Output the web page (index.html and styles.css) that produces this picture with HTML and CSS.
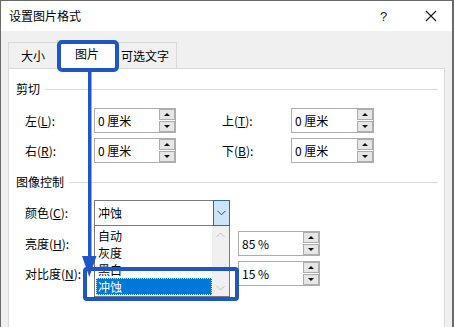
FILE: index.html
```html
<!DOCTYPE html>
<html lang="zh-CN">
<head>
<meta charset="utf-8">
<title>设置图片格式</title>
<link rel="stylesheet" href="styles.css">
</head>
<body>
<div class="window">
  <div class="titlebar">
    <span class="title">设置图片格式</span>
    <span class="help">?</span>
    <span class="close">
      <svg width="12" height="12" viewBox="0 0 12 12"><path d="M1 1L11 11M11 1L1 11" stroke="#1a1a1a" stroke-width="1.1" fill="none"/></svg>
    </span>
  </div>
  <div class="tabs">
    <div class="tab">大小</div>
    <div class="tab active">图片</div>
    <div class="tab">可选文字</div>
  </div>
  <div class="panel">
    <div class="heading"><span>剪切</span><i class="rule"></i></div>
    <div class="crop-grid">
      <div class="label">左(<u>L</u>):</div>
      <div class="spin"><span>0 厘米</span><div class="spin-btns"><b class="up"></b><b class="down"></b></div></div>
      <div></div>
      <div class="label">上(<u>T</u>):</div>
      <div class="spin"><span>0 厘米</span><div class="spin-btns"><b class="up"></b><b class="down"></b></div></div>
      <div class="label">右(<u>R</u>):</div>
      <div class="spin"><span>0 厘米</span><div class="spin-btns"><b class="up"></b><b class="down"></b></div></div>
      <div></div>
      <div class="label">下(<u>B</u>):</div>
      <div class="spin"><span>0 厘米</span><div class="spin-btns"><b class="up"></b><b class="down"></b></div></div>
    </div>
    <div class="heading h2"><span>图像控制</span><i class="rule"></i></div>
    <div class="img-grid">
      <div class="label">颜色(<u>C</u>):</div>
      <div class="combo">
        <span>冲蚀</span>
        <div class="combo-btn"><svg width="9" height="6" viewBox="0 0 9 6"><path d="M0.5 0.8L4.5 4.8L8.5 0.8" stroke="#444" stroke-width="1" fill="none"/></svg></div>
        <div class="droplist">
          <div class="items">
            <div class="item">自动</div>
            <div class="item">灰度</div>
            <div class="item">黑白</div>
            <div class="item selected">冲蚀</div>
          </div>
          <div class="scroll">
            <svg width="9" height="6" viewBox="0 0 9 6"><path d="M0.5 5L4.5 1L8.5 5" stroke="#c2c2c2" stroke-width="1" fill="none"/></svg>
            <svg width="9" height="6" viewBox="0 0 9 6"><path d="M0.5 1L4.5 5L8.5 1" stroke="#c2c2c2" stroke-width="1" fill="none"/></svg>
          </div>
        </div>
      </div>
      <div></div>
      <div></div>
      <div class="label">亮度(<u>H</u>):</div>
      <div class="slider"></div>
      <div></div>
      <div class="spin"><span>85 %</span><div class="spin-btns"><b class="up"></b><b class="down"></b></div></div>
      <div class="label">对比度(<u>N</u>):</div>
      <div class="slider"></div>
      <div></div>
      <div class="spin"><span>15 %</span><div class="spin-btns"><b class="up"></b><b class="down"></b></div></div>
    </div>
  </div>
  <svg class="annot" width="454" height="327" viewBox="0 0 454 327">
    <rect x="59" y="42" width="58" height="28" rx="3" fill="none" stroke="#1f55c6" stroke-width="4"/>
    <rect x="88" y="71" width="3.5" height="188" fill="#1f55c6"/>
    <polygon points="82,256 96.5,256 89.3,277" fill="#1f55c6"/>
    <rect x="85" y="269" width="152" height="30" rx="2" fill="none" stroke="#1f55c6" stroke-width="4"/>
  </svg>
</div>
</body>
</html>
```

FILE: styles.css
```css
* { box-sizing: border-box; }
html, body { margin: 0; padding: 0; }
body {
  width: 454px;
  height: 327px;
  overflow: hidden;
  font-family: "Noto Sans CJK SC", "Noto Sans", sans-serif;
  font-size: 12px;
  color: #000;
  background: #f0f0f0;
}
.window {
  position: relative;
  width: 454px;
  height: 327px;
  border: 1px solid #6a6a6a;
  border-bottom: none;
  border-right-width: 2px;
  background: #f0f0f0;
  overflow: hidden;
}
.titlebar {
  height: 30px;
  background: #fff;
  display: flex;
  align-items: center;
  padding-left: 8px;
}
.title { flex: 1; line-height: 16px; }
.help { width: 14px; margin-right: 31px; font-family: "Liberation Sans", sans-serif; font-size: 13px; color: #222; }
.close { width: 12px; height: 12px; margin-right: 15px; display: flex; }
.tabs {
  display: flex;
  align-items: flex-end;
  height: 37px;
  padding-left: 7px;
}
.tab {
  height: 26px;
  padding: 0 11px;
  border: 1px solid #d9d9d9;
  border-bottom: none;
  background: #f0f0f0;
  display: flex;
  align-items: center;
  line-height: 16px;
  margin-right: -1px;
}
.tab:first-child { width: 50px; justify-content: center; }
.tab.active {
  height: 29px;
  width: 60px;
  justify-content: center;
  background: #fff;
  margin-bottom: -1px;
  position: relative;
  z-index: 1;
  padding-bottom: 3px;
}
.tab:last-child { padding: 0 7px 0 4px; }
.panel {
  margin-left: 7px;
  width: 437px;
  height: 270px;
  background: #fff;
  border: 1px solid #d9d9d9;
  padding: 12px 6px 0 7px;
}
.heading {
  display: flex;
  align-items: center;
  height: 16px;
  line-height: 16px;
}
.heading .rule {
  flex: 1;
  height: 1px;
  background: #dadada;
  margin-left: 5px;
}
.heading.h2 { margin-top: 11px; }
.label { line-height: 16px; white-space: nowrap; }
.label u { text-underline-offset: 1px; }
.crop-grid {
  margin: 11px 0 0 9px;
  display: grid;
  grid-template-columns: 69px 82px 46px 69px 83px;
  grid-auto-rows: 25px;
  row-gap: 5px;
  align-items: center;
}
.spin {
  height: 25px;
  border: 1px solid #adadad;
  background: #fff;
  display: flex;
  align-items: center;
  padding-left: 3px;
  position: relative;
  line-height: 16px;
}
.spin span { flex: 1; }
.spin-btns {
  display: flex;
  flex-direction: column;
  gap: 1px;
  width: 16px;
  height: 23px;
  margin-right: 0;
}
.spin-btns b {
  flex: 1;
  background: #e6e6e6;
  border: 1px solid #adadad;
  display: flex;
  align-items: center;
  justify-content: center;
}
.spin-btns b::after {
  content: "";
  width: 0; height: 0;
  border-left: 3px solid transparent;
  border-right: 3px solid transparent;
}
.spin-btns .up::after { border-bottom: 3px solid #111; }
.spin-btns .down::after { border-top: 3px solid #111; }
.img-grid {
  margin: 10px 0 0 9px;
  display: grid;
  grid-template-columns: 69px 136px 8px 82px;
  grid-template-rows: 26px 25px 25px;
  row-gap: 5px;
  align-items: center;
}
.slider { height: 25px; }
.combo {
  position: relative;
  height: 26px;
  border: 1px solid #7a7a7a;
  display: flex;
  align-items: center;
  padding-left: 3px;
  line-height: 16px;
  background: #fff;
}
.combo > span { flex: 1; }
.combo-btn {
  width: 17px;
  height: 26px;
  margin: -1px -1px -1px 0;
  background: #cce4f7;
  border: 1px solid #2f6b9c;
  display: flex;
  align-items: center;
  justify-content: center;
}
.droplist {
  position: absolute;
  top: 25px;
  left: -1px;
  width: 136px;
  height: 71px;
  background: #fff;
  border: 1px solid #7a7a7a;
  border-top: none;
  display: flex;
  z-index: 5;
}
.items { flex: 1; padding: 1px 0 0 1px; }
.item { height: 17px; line-height: 17px; padding-left: 2px; }
.item.selected {
  background: #0078d7;
  color: #fff;
  outline: 1px dotted #cfe3f7;
  outline-offset: -1px;
}
.scroll {
  width: 17px;
  background: #f0f0f0;
  display: flex;
  flex-direction: column;
  justify-content: space-between;
  align-items: center;
  padding: 6px 0 5px;
}
.annot {
  position: absolute;
  left: -1px;
  top: -1px;
  pointer-events: none;
  z-index: 10;
}
```
